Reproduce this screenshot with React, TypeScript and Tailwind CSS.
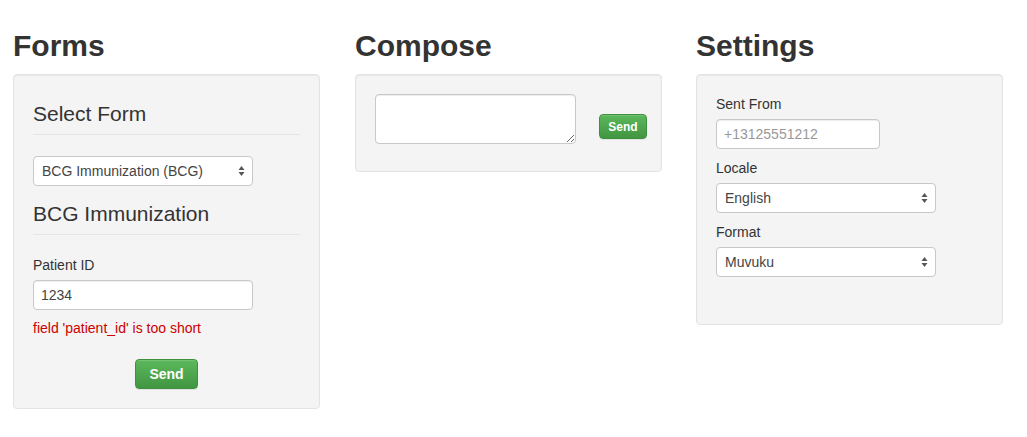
import React from "react";

const font = { fontFamily: '"Liberation Sans", Arial, sans-serif' };

const Arrows = () => (
  <svg
    width="7"
    height="11"
    viewBox="0 0 7 11"
    className="absolute right-[8px] top-1/2 -translate-y-1/2 pointer-events-none"
  >
    <path d="M3.5 0.5 L6.5 4.5 L0.5 4.5 Z" fill="#555" />
    <path d="M3.5 10.5 L6.5 6.5 L0.5 6.5 Z" fill="#555" />
  </svg>
);

const Select = ({ value, className = "" }: { value: string; className?: string }) => (
  <div className={`relative h-[30px] w-[220px] ${className}`}>
    <div className="h-full w-full rounded-[4px] border border-[#c8c8c8] bg-white pl-[8px] text-[14px] leading-[28px] text-[#444]">
      {value}
    </div>
    <Arrows />
  </div>
);

const Well = ({ children, className = "" }: { children: React.ReactNode; className?: string }) => (
  <div
    className={`rounded-[4px] border border-[#e3e3e3] bg-[#f4f4f4] p-[19px] shadow-[inset_0_1px_1px_rgba(0,0,0,0.05)] ${className}`}
  >
    {children}
  </div>
);

const Heading = ({ children }: { children: React.ReactNode }) => (
  <h2 className="mt-[29px] mb-[12px] text-[30px] font-bold leading-[33px] text-[#333]">{children}</h2>
);

const Legend = ({ children }: { children: React.ReactNode }) => (
  <div className="border-b border-[#e5e5e5] pt-[5px] pb-[5px] text-[21px] leading-[30px] text-[#333]">
    {children}
  </div>
);

const Label = ({ children }: { children: React.ReactNode }) => (
  <div className="mb-[5px] text-[14px] leading-[20px] text-[#333]">{children}</div>
);

const SendButton = ({ className = "" }: { className?: string }) => (
  <button
    className={`shrink-0 rounded-[4px] border border-[#3e8f3e] bg-gradient-to-b from-[#5cb85c] to-[#419641] font-bold text-white shadow-[inset_0_1px_0_rgba(255,255,255,0.15),0_1px_1px_rgba(0,0,0,0.075)] ${className}`}
  >
    Send
  </button>
);

export default function App() {
  return (
    <div className="min-h-[437px] w-[1027px] bg-white pl-[13px]" style={font}>
      <div className="flex">
        <div className="w-[307px] shrink-0">
          <Heading>Forms</Heading>
          <Well>
            <Legend>Select Form</Legend>
            <Select value="BCG Immunization (BCG)" className="mt-[21px] mb-[8px]" />
            <Legend>BCG Immunization</Legend>
            <div className="mt-[20px]">
              <Label>Patient ID</Label>
              <div className="h-[30px] w-[220px] rounded-[4px] border border-[#c8c8c8] bg-white pl-[7px] text-[14px] leading-[28px] text-[#444] shadow-[inset_0_1px_1px_rgba(0,0,0,0.075)]">
                1234
              </div>
              <div className="mt-[8px] text-[14px] leading-[20px] text-[#cc0000]">
                field 'patient_id' is too short
              </div>
            </div>
            <div className="mt-[21px] flex justify-center">
              <SendButton className="h-[30px] w-[63px] text-[14px]" />
            </div>
          </Well>
        </div>

        <div className="ml-[35px] w-[307px] shrink-0">
          <Heading>Compose</Heading>
          <Well>
            <div className="flex items-start">
              <textarea className="mb-[8px] h-[50px] w-[201px] shrink-0 resize-y rounded-[4px] border border-[#c8c8c8] bg-white shadow-[inset_0_1px_1px_rgba(0,0,0,0.075)] outline-none" />
              <SendButton className="ml-[23px] mt-[20px] h-[25px] w-[48px] text-[12px]" />
            </div>
          </Well>
        </div>

        <div className="ml-[34px] w-[307px] shrink-0">
          <Heading>Settings</Heading>
          <Well className="pb-[47px]">
            <Label>Sent From</Label>
            <div className="mb-[9px] h-[30px] w-[164px] rounded-[4px] border border-[#c8c8c8] bg-white pl-[7px] text-[14px] leading-[28px] text-[#999] shadow-[inset_0_1px_1px_rgba(0,0,0,0.075)]">
              +13125551212
            </div>
            <Label>Locale</Label>
            <Select value="English" className="mb-[9px]" />
            <Label>Format</Label>
            <Select value="Muvuku" />
          </Well>
        </div>
      </div>
    </div>
  );
}
